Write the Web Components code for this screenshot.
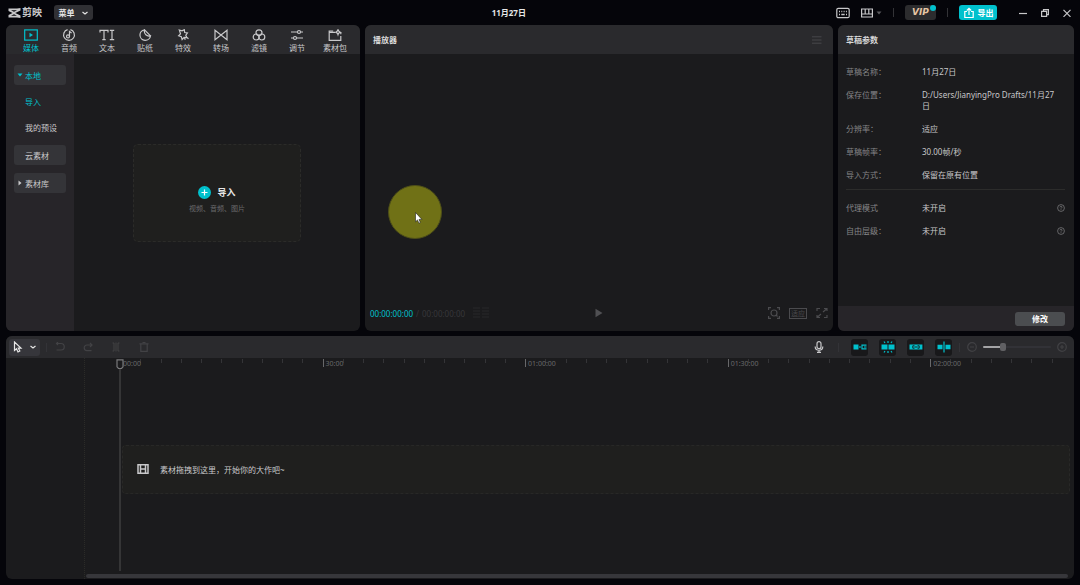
<!DOCTYPE html>
<html lang="zh-CN">
<head>
<meta charset="UTF-8">
<meta name="viewport" content="width=device-width, initial-scale=1">
<title>剪映</title>
<style>
    body {
        margin: 0;
        background: #05050a;
        color: #c8c8ca;
        font-family: "Noto Sans", "Noto Sans CJK SC", sans-serif;
        font-size: 8px;
        line-height: 11px;
        --cyan: #00c1cd;
        --panel: #1b1b1d;
        --head: #2a2a2d;
    }
</style>
</head>
<body>
<editor-app>
    <title-bar slot="top">11月27日</title-bar>
    <media-panel slot="media"></media-panel>
    <player-panel slot="player">播放器</player-panel>
    <draft-panel slot="draft">
        <span slot="title">草稿参数</span>
        <draft-row label="草稿名称：">11月27日</draft-row>
        <draft-row label="保存位置：">D:/Users/JianyingPro Drafts/11月27日</draft-row>
        <draft-row label="分辨率：">适应</draft-row>
        <draft-row label="草稿帧率：">30.00帧/秒</draft-row>
        <draft-row label="导入方式：">保留在原有位置</draft-row>
        <draft-row slot="more" label="代理模式" help>未开启</draft-row>
        <draft-row slot="more" label="自由层级：" help>未开启</draft-row>
    </draft-panel>
    <time-line slot="timeline">素材拖拽到这里，开始你的大作吧~</time-line>
</editor-app>

<script>
const ICONS = {
    logo: [13, 10, '<path d="M.5.500H9L12.500 0v2.600L7.200 5l5.300 2.400V10L9 9.500H.5V7L4.500 5 .5 3zM3 2.200l3 1.500 3-1.500zM3 7.800h6L6 6.300z" fill="currentColor" stroke="none" fill-rule="evenodd"/>'],
    down: [8, 8, '<path d="M1.500 3 4 5l2.500-2"/>'],
    caret: [6, 6, '<path d="M.5 1.500h5L3 4.500z" fill="currentColor" stroke="none"/>'],
    caretRight: [6, 6, '<path d="M1.500.5v5L4.500 3z" fill="currentColor" stroke="none"/>'],
    keyboard: [14, 12, '<rect x=".8" y="1.300" width="12.400" height="9.400" rx="1.500"/><path d="M3 4.500h1m1.300 0h1m1.300 0h1m1.300 0h1M3 7.500h1m1.300 0h3.400m1.300 0h1" stroke-width="1.300"/>'],
    layout: [12, 10, '<path d="M.6 1h10.800v8H.6zM.6 6h10.800M4.200 1v5M7.800 1v5"/>'],
    share: [12, 12, '<path d="M4 4.500H1.800v6h8.400v-6H8M6 8V1.500M3.800 3.500 6 1.300l2.200 2.200"/>'],
    min: [8, 8, '<path d="M0 4.500h8"/>'],
    restore: [8, 8, '<path d="M.6 2.400h5v5h-5zM2.500 2.200V.6h4.900v5H5.800"/>'],
    close: [8, 8, '<path d="m.5.8 7 7m0-7-7 7"/>'],
    media: [14, 12, '<rect x=".7" y=".9" width="12.600" height="10.200"/><path d="M5.500 3.800v4.400L9 6z" fill="currentColor" stroke="none"/>'],
    audio: [14, 12, '<path d="M5.600.7a5.400 5.400 0 1 0 2.800 0"/><circle cx="6" cy="7.400" r="1.500"/><path d="M7.500 7.400V2.500L9.600 4"/>'],
    text: [16, 12, '<path d="M1 3.500V1.300h8v2.200M5 1.300v9.400M3.300 10.700h3.400M10.800 1.300h4.400M13 1.300v9.400M10.800 10.700h4.400"/>'],
    sticker: [14, 12, '<path d="M6.500.8a5.300 5.300 0 1 0 6 6C9 7.800 5.500 5 6.500.8l6 6"/>'],
    effect: [14, 12, '<path d="m3.300 1 2.700.9L8.300.7l.4 2.800 2.700.4-1.600 2.300 1 2.300-2.700-.2-2 2.200-.8-2.700-2.700-1L4.500 4.800zM9.300 10.700 8.500 9.200M12.500 9.700 11 8.500"/>'],
    trans: [14, 12, '<path d="M1 1.300v9.400l12-9.400v9.400z"/>'],
    filter: [14, 12, '<circle cx="7" cy="3.800" r="3"/><circle cx="4.200" cy="8" r="3"/><circle cx="9.800" cy="8" r="3"/>'],
    adjust: [14, 12, '<path d="M1 3h6.500m3 0H13M1 9h2.500m3 0H13"/><circle cx="9" cy="3" r="1.500"/><circle cx="5" cy="9" r="1.500"/>'],
    pack: [14, 12, '<path d="M7 3.300H1.200v8h11.600V7M12.800 3.300v2M1.200 3.300V2h4M10 .5c.5 2 .8 2.200 2.300 2.700-1.500.4-1.800.7-2.300 2.400-.5-1.700-.8-2-2.300-2.400C9.200 2.700 9.500 2.500 10 .5z"/>'],
    plus: [13, 13, '<circle cx="6.500" cy="6.500" r="6.500" fill="#00c1cd" stroke="none"/><path d="M3.500 6.500h6m-3-3v6" stroke="#fff"/>'],
    bars: [10, 8, '<path d="M0 .8h9.500M0 4h9.500M0 7.200h9.500" stroke-width="1"/>'],
    frames: [16, 12, '<path d="M0 1h7M0 4h7M0 7h7M0 10h7M9 1h7M9 4h7M9 7h7M9 10h7"/>'],
    play: [8, 10, '<path d="M.5.800v8.400L7.500 5z" fill="currentColor" stroke="none"/>'],
    scan: [12, 12, '<path d="M.6 3V.6H3M9 .6h2.400V3M11.400 9v2.400H9M3 11.400H.6V9"/><circle cx="6" cy="6" r="3"/><path d="m8 8 1.500 1.500"/>'],
    full: [12, 12, '<path d="M1 4V1.500h3M8 1.500h3V4M11 8v2.500H8M4 10.500H1V8M7 5l3.500-3M5 7l-3.500 3"/>'],
    help: [8, 8, '<circle cx="4" cy="4" r="3.400" stroke-width=".8"/><path d="M3 3.300c0-1.300 2-1.300 2 0 0 .6-1 .6-1 1.300M4 5.300v.7" stroke-width=".8"/>'],
    arrow: [10, 12, '<path d="M1.500 1v8.500l2-1.700L5 11l1.800-.9-1.500-3h2.700z"/>'],
    pointer: [8, 13, '<path d="M.5.5v9.300l2-1.900 1.400 3.300 1.500-.7L4 7.400h2.900z" fill="#fff" stroke="#222" stroke-width=".6"/>'],
    undo: [10, 10, '<path d="M1.500 1.500h4.500a3 3 0 0 1 0 6.500H1.500M3 0 1.500 1.500 3 3"/>'],
    redo: [10, 10, '<path d="M8.500 3H4a2.800 2.800 0 0 0 0 5.600h4.500M7 .8 9 3 7 5"/>'],
    split: [10, 10, '<path d="M1.500 1H3v8H1.500M8.500 1H7v8h1.500M5 .5v9" stroke-width="1"/>'],
    trash: [10, 10, '<path d="M.5 1.800h9M1.800 1.800v7.500h6.400V1.800M3.500.500h3"/>'],
    mic: [10, 12, '<rect x="3" y=".7" width="4" height="7" rx="2"/><path d="M1.200 5.500c0 5 7.600 5 7.600 0M5 9.300v2M3 11.400h4"/>'],
    magnet: [14, 10, '<path d="M.5 2.500h5v5h-5zM6.200 4.300h1.500v1.400H6.200z" fill="currentColor" stroke="none"/><path d="M13.500 3.100H9v3.800h4.500M11 5h2.500"/>'],
    snap: [14, 12, '<path d="M.5 3.500h6v5h-6zM7.500 3.500h6v5h-6z" fill="currentColor" stroke="none"/><path d="M7 0v2M7 10v2M3 .5l1 1.500M11 .5 10 2M3 11.500 4 10M11 11.500 10 10"/>'],
    link: [14, 10, '<path d="M.5 2.500h12.900v5H.5z" fill="currentColor" stroke="none"/><path d="M5.500 3.800H3.800v2.400h1.700M8.500 3.800h1.700v2.400H8.500M5.500 5h3" stroke="#17191b" stroke-width=".9"/>'],
    axis: [14, 12, '<path d="M.5 3.700h5v4.600h-5zM8.500 3.700h5v4.600h-5z" fill="currentColor" stroke="none"/><path d="M7 .5v11"/>'],
    zoomOut: [10, 10, '<circle cx="5" cy="5" r="4.300"/><path d="M3 5h4"/>'],
    zoomIn: [10, 10, '<circle cx="5" cy="5" r="4.300"/><path d="M3 5h4M5 3v4"/>'],
    film: [12, 12, '<path d="M1 1.700h10v8.600H1zM3.500 1.700v8.600M8.500 1.700v8.600M3.500 6h5" stroke-width="1.500"/>'],
    head: [8, 11, '<path d="M1 .8h6v7L5.500 9.500h-3L1 7.800z" fill="#1b1b1d"/>']
};

// reset shared by every shadow root
const BASE = `
    * { box-sizing: border-box; }
    button {
        display: flex; align-items: center; justify-content: center;
        margin: 0; padding: 0; border: 0; background: none;
        color: inherit; font: inherit; white-space: nowrap; cursor: pointer;
    }
    .grow { flex: 1; }
    .sep { width: 1px; height: 9px; background: #333337; }
`;

class Base extends HTMLElement {
    connectedCallback() {
        if (this.shadowRoot) return;
        this.attachShadow({ mode: "open" });
        this.shadowRoot.innerHTML = `<style>${BASE}</style>` + this._render();
    }
}

class CutIcon extends Base {
    _render() {
        const [w, h, body] = ICONS[this.getAttribute("name")];
        return `
        <style>
            :host { display: block; flex: none; }
            svg { display: block; }
        </style>
        <svg width="${w}" height="${h}" viewBox="0 0 ${w} ${h}" fill="none" stroke="currentColor" stroke-width="1.2" aria-hidden="true">${body}</svg>`;
    }
}

class EditorApp extends Base {
    _render() {
        return `
        <style>
            :host {
                display: grid;
                grid-template-rows: 25px 306fr 254fr;
                min-height: 100vh;
            }
            .panels {
                display: grid;
                grid-template-columns: 354fr 468fr 236fr;
                gap: 5px;
                padding: 0 6px;
            }
            .bottom { display: grid; padding: 5px 6px 6px; }
        </style>
        <slot name="top"></slot>
        <main class="panels">
            <slot name="media"></slot>
            <slot name="player"></slot>
            <slot name="draft"></slot>
        </main>
        <div class="bottom"><slot name="timeline"></slot></div>`;
    }
}

class TitleBar extends Base {
    _render() {
        return `
        <style>
            :host { display: flex; align-items: center; padding: 0 9px 0 8px; }
            .logo { display: flex; align-items: center; gap: 1px; font-size: 10px; font-weight: 700; }
            .menu {
                gap: 6px; width: 39px; height: 15px; margin-left: 12px;
                border-radius: 3px; background: #303034; color: #e6e6e6; font-weight: 700;
            }
            .left { flex: 9; }
            .right { flex: 7; }
            h1 { margin: 0; font-size: 8px; font-weight: 700; color: #e6e6e6; }
            .tools, .win { display: flex; align-items: center; }
            .tools { gap: 11px; }
            .layout { gap: 3px; }
            .layout cut-icon + cut-icon { color: #58585c; }
            .vip {
                position: relative; width: 31px; height: 15px;
                border-radius: 3px; background: #2c2c2e; color: #e5c5a4;
                font-family: "DejaVu Sans", sans-serif; font-size: 9px; font-weight: 700; font-style: italic;
            }
            .vip::after {
                content: ""; position: absolute; top: 0; right: 0;
                width: 6px; height: 6px; border-radius: 50%; background: var(--cyan);
            }
            .export {
                gap: 3px; width: 38px; height: 15px; border-radius: 3px;
                background: var(--cyan); color: #fff; font-weight: 700;
            }
            .win { gap: 14px; margin-left: 22px; }
        </style>
        <div class="logo"><cut-icon name="logo"></cut-icon><span>剪映</span></div>
        <button class="menu">菜单<cut-icon name="down"></cut-icon></button>
        <span class="left"></span>
        <h1><slot></slot></h1>
        <span class="right"></span>
        <div class="tools">
            <button aria-label="快捷键"><cut-icon name="keyboard"></cut-icon></button>
            <button class="layout" aria-label="布局"><cut-icon name="layout"></cut-icon><cut-icon name="caret"></cut-icon></button>
            <span class="sep"></span>
            <button class="vip">VIP</button>
            <span class="sep"></span>
            <button class="export"><cut-icon name="share"></cut-icon>导出</button>
        </div>
        <div class="win">
            <button aria-label="最小化"><cut-icon name="min"></cut-icon></button>
            <button aria-label="还原"><cut-icon name="restore"></cut-icon></button>
            <button aria-label="关闭"><cut-icon name="close"></cut-icon></button>
        </div>`;
    }
}

class MediaTab extends Base {
    _render() {
        return `
        <style>
            :host { display: block; width: 38px; }
            :host([active]) { color: var(--cyan); }
            button { flex-direction: column; gap: 1px; width: 100%; padding-top: 3px; }
        </style>
        <button><cut-icon name="${this.getAttribute("icon")}"></cut-icon><slot></slot></button>`;
    }
}

class SideItem extends Base {
    _render() {
        const arrow = this.getAttribute("arrow");
        return `
        <style>
            :host { display: block; }
            :host([active]) { color: var(--cyan); }
            :host([pill]) button { background: #343438; }
            button { justify-content: flex-start; width: 100%; height: 20px; border-radius: 3px; }
            .mark { width: 8px; margin-left: 3px; }
        </style>
        <button><span class="mark">${arrow ? `<cut-icon name="${arrow}"></cut-icon>` : ""}</span><slot></slot></button>`;
    }
}

class MediaPanel extends Base {
    _render() {
        return `
        <style>
            :host {
                display: grid; grid-template-rows: 29px 1fr;
                border-radius: 6px; background: var(--panel); overflow: hidden;
            }
            nav { display: flex; align-items: center; padding: 0 6px; background: var(--head); }
            .body { display: grid; grid-template-columns: 68px 1fr; }
            aside {
                display: flex; flex-direction: column; gap: 8px;
                padding: 11px 8px; background: #272529;
            }
            .group { display: flex; flex-direction: column; gap: 6px; }
            .area { display: grid; place-items: center; }
            .drop {
                flex-direction: column; gap: 4px; width: 168px; height: 98px; padding-top: 14px;
                border: 1px dashed #2b2b29; border-radius: 5px; background: #1f1f1e;
            }
            .drop b { display: flex; align-items: center; gap: 6px; font-size: 9px; color: #e6e6e6; }
            .drop small { font-size: 7px; color: #6a6a6c; }
        </style>
        <nav>
            <media-tab icon="media" active>媒体</media-tab>
            <media-tab icon="audio">音频</media-tab>
            <media-tab icon="text">文本</media-tab>
            <media-tab icon="sticker">贴纸</media-tab>
            <media-tab icon="effect">特效</media-tab>
            <media-tab icon="trans">转场</media-tab>
            <media-tab icon="filter">滤镜</media-tab>
            <media-tab icon="adjust">调节</media-tab>
            <media-tab icon="pack">素材包</media-tab>
        </nav>
        <div class="body">
            <aside>
                <div class="group">
                    <side-item pill active arrow="caret">本地</side-item>
                    <side-item active>导入</side-item>
                    <side-item>我的预设</side-item>
                </div>
                <side-item pill>云素材</side-item>
                <side-item pill arrow="caretRight">素材库</side-item>
            </aside>
            <div class="area">
                <button class="drop">
                    <b><cut-icon name="plus"></cut-icon>导入</b>
                    <small>视频、音频、图片</small>
                </button>
            </div>
        </div>`;
    }
}

class PlayerPanel extends Base {
    _render() {
        return `
        <style>
            :host {
                display: grid; grid-template-rows: 29px 1fr 36px;
                border-radius: 6px; background: var(--panel); overflow: hidden;
            }
            header {
                display: flex; align-items: center; justify-content: space-between;
                padding: 0 11px 0 8px; background: var(--head);
            }
            h2 { margin: 0; font-size: 8px; color: #d8d8d8; }
            header button { color: #47474b; }
            .stage { position: relative; }
            /* click highlight that follows the mouse */
            .spot {
                position: absolute; left: 23px; top: 131px;
                width: 54px; height: 54px; border-radius: 50%;
                background: #707116; border: 1px solid #4d4e18;
            }
            .spot cut-icon { position: absolute; left: 26px; top: 26px; }
            footer {
                display: grid; grid-template-columns: 1fr auto 1fr; align-items: center;
                padding: 0 5px; color: #37373a;
            }
            footer > button { color: #505053; }
            .time, .view { display: flex; align-items: center; }
            .time { gap: 3px; }
            .time b { font-weight: 400; color: var(--cyan); }
            .time button { margin-left: 5px; color: #29292a; }
            .view { justify-content: flex-end; gap: 9px; color: #4b4b4e; }
            .fit { width: 18px; height: 11px; border: 1px solid; font-size: 7px; line-height: 9px; }
        </style>
        <header>
            <h2><slot></slot></h2>
            <button aria-label="播放器菜单"><cut-icon name="bars"></cut-icon></button>
        </header>
        <div class="stage"><div class="spot"><cut-icon name="pointer"></cut-icon></div></div>
        <footer>
            <div class="time">
                <b>00:00:00:00</b><span>/</span><span>00:00:00:00</span>
                <button aria-label="逐帧"><cut-icon name="frames"></cut-icon></button>
            </div>
            <button aria-label="播放"><cut-icon name="play"></cut-icon></button>
            <div class="view">
                <button aria-label="缩放"><cut-icon name="scan"></cut-icon></button>
                <button class="fit">适应</button>
                <button aria-label="全屏"><cut-icon name="full"></cut-icon></button>
            </div>
        </footer>`;
    }
}

class DraftRow extends Base {
    _render() {
        return `
        <style>
            :host { display: grid; grid-template-columns: 76px 1fr auto; }
            .label { color: #858587; }
            .value { padding-right: 5px; }
            cut-icon { color: #77777a; }
        </style>
        <span class="label">${this.getAttribute("label")}</span>
        <span class="value"><slot></slot></span>
        ${this.hasAttribute("help") ? `<button aria-label="说明"><cut-icon name="help"></cut-icon></button>` : ""}`;
    }
}

class DraftPanel extends Base {
    _render() {
        return `
        <style>
            :host {
                display: grid; grid-template-rows: 29px 1fr 25px;
                border-radius: 6px; background: var(--panel); overflow: hidden;
            }
            header {
                display: flex; align-items: center; padding: 0 8px;
                background: var(--head); font-weight: 700; color: #d8d8d8;
            }
            .list { padding: 12px 9px 0 8px; }
            .rows { display: grid; gap: 12px; }
            .rows + .rows { margin-top: 9px; padding-top: 12px; border-top: 1px solid #2c2c2b; }
            footer {
                display: flex; align-items: center; justify-content: flex-end;
                padding: 0 9px; background: #272529;
            }
            footer button {
                width: 50px; height: 14px; border-radius: 3px;
                background: #4b4d50; color: #fff; font-weight: 700;
            }
        </style>
        <header><slot name="title"></slot></header>
        <div class="list">
            <div class="rows"><slot></slot></div>
            <div class="rows"><slot name="more"></slot></div>
        </div>
        <footer><button>修改</button></footer>`;
    }
}

class TimeLine extends Base {
    _render() {
        const marks = [["00:00", 10], ["30:00", 10], ["01:00:00", 10], ["01:30:00", 10], ["02:00:00", 7]];
        const ruler = marks.map(([label, n]) =>
            `<div class="mark" style="flex-grow:${n}">${"<i></i>".repeat(n)}<span>${label}</span></div>`).join("");
        return `
        <style>
            :host {
                display: grid; grid-template-rows: 22px 1fr;
                border-radius: 6px; background: var(--panel); overflow: hidden;
            }
            .bar { display: flex; align-items: center; padding: 0 7px 0 3px; background: var(--head); }
            .select { gap: 6px; width: 31px; height: 17px; border-radius: 3px; background: #36363b; color: #e6e6e6; }
            .bar .sep { margin: 0 4px 0 6px; }
            .edit { display: flex; gap: 18px; margin-left: 4px; color: #424245; }
            .mic { margin-right: 8px; }
            .toggles { display: flex; gap: 11px; margin: 0 1px 0 8px; }
            .toggles button { width: 17px; height: 17px; border-radius: 3px; background: #18181a; color: var(--cyan); }
            .zoom { display: flex; align-items: center; gap: 6px; margin-left: 3px; color: #414144; }
            input {
                appearance: none; width: 68px; height: 10px; margin: 0; background: none;
            }
            input::-webkit-slider-runnable-track {
                height: 2px; border-radius: 1px;
                background: linear-gradient(to right, #a4a4a6 28%, #323237 28%);
            }
            input::-webkit-slider-thumb {
                appearance: none; width: 6px; height: 8px; margin-top: -3px;
                border-radius: 2px; background: #606063;
            }
            .body { display: grid; grid-template-columns: 79px 1fr; }
            .heads { border-right: 1px dotted #2b2b28; }
            .lane { position: relative; display: flex; flex-direction: column; }
            .ruler { display: flex; height: 11px; padding: 0 2px 0 35px; }
            .mark { position: relative; display: flex; flex: 1 0 0; align-items: flex-start; }
            i { flex: 1; height: 4px; margin-top: 1px; border-left: 1px solid #343437; }
            i:first-child { height: 8px; border-color: #68686a; }
            .mark span { position: absolute; left: 3px; top: 0; font-size: 7px; line-height: 11px; color: #69696b; }
            .mark:first-child i:first-child { border-color: transparent; }
            .tracks { display: flex; flex: 1; align-items: center; padding: 0 4px 2px 37px; }
            .track {
                display: flex; flex: 1; align-items: center; gap: 11px; height: 49px; padding-left: 14px;
                border: 1px dashed #282827; border-radius: 4px; background: #1f1f1e;
            }
            .scroll { height: 4px; margin: 3px 6px 1px 1px; border-radius: 2px; background: #37373b; }
            .playhead {
                position: absolute; left: 31px; top: 1px; bottom: 8px; width: 8px; color: #79797b;
            }
            .playhead::after {
                content: ""; position: absolute; left: 3px; top: 10px; bottom: 0;
                width: 2px; background: #353536;
            }
        </style>
        <div class="bar">
            <button class="select" aria-label="选择"><cut-icon name="arrow"></cut-icon><cut-icon name="down"></cut-icon></button>
            <span class="sep"></span>
            <div class="edit">
                <button aria-label="撤销"><cut-icon name="undo"></cut-icon></button>
                <button aria-label="恢复"><cut-icon name="redo"></cut-icon></button>
                <button aria-label="分割"><cut-icon name="split"></cut-icon></button>
                <button aria-label="删除"><cut-icon name="trash"></cut-icon></button>
            </div>
            <span class="grow"></span>
            <button class="mic" aria-label="录音"><cut-icon name="mic"></cut-icon></button>
            <span class="sep"></span>
            <div class="toggles">
                <button aria-label="主轨磁吸"><cut-icon name="magnet"></cut-icon></button>
                <button aria-label="自动吸附"><cut-icon name="snap"></cut-icon></button>
                <button aria-label="联动"><cut-icon name="link"></cut-icon></button>
                <button aria-label="预览轴"><cut-icon name="axis"></cut-icon></button>
            </div>
            <span class="sep"></span>
            <div class="zoom">
                <button aria-label="缩小"><cut-icon name="zoomOut"></cut-icon></button>
                <input type="range" min="0" max="100" value="28" aria-label="时间线缩放">
                <button aria-label="放大"><cut-icon name="zoomIn"></cut-icon></button>
            </div>
        </div>
        <div class="body">
            <div class="heads"></div>
            <div class="lane">
                <div class="ruler">${ruler}</div>
                <div class="tracks">
                    <div class="track"><cut-icon name="film"></cut-icon><slot></slot></div>
                </div>
                <div class="scroll"></div>
                <div class="playhead"><cut-icon name="head"></cut-icon></div>
            </div>
        </div>`;
    }
}

customElements.define("cut-icon", CutIcon);
customElements.define("editor-app", EditorApp);
customElements.define("title-bar", TitleBar);
customElements.define("media-tab", MediaTab);
customElements.define("side-item", SideItem);
customElements.define("media-panel", MediaPanel);
customElements.define("player-panel", PlayerPanel);
customElements.define("draft-row", DraftRow);
customElements.define("draft-panel", DraftPanel);
customElements.define("time-line", TimeLine);
</script>
</body>
</html>
